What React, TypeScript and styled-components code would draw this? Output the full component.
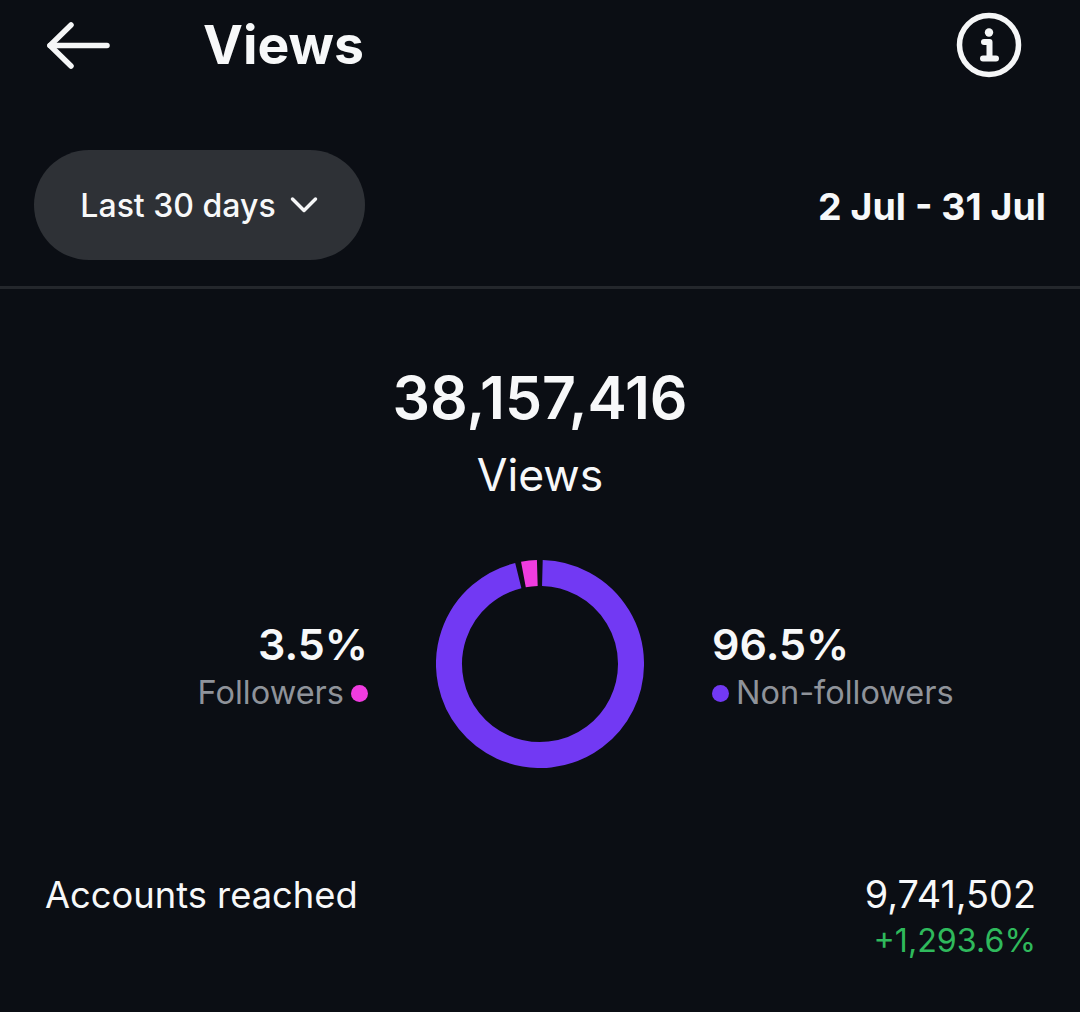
import { createGlobalStyle } from 'styled-components'
import styled from 'styled-components'

const GlobalStyle = createGlobalStyle`
	html, body {
		margin: 0;
		padding: 0;
		background: #0b0e14;
	}
`

const BackIcon = () => (
	<svg width="66" height="56" viewBox="0 0 66 56" fill="none" stroke="#f5f6f7" strokeWidth="5.5" strokeLinecap="round" strokeLinejoin="round">
		<path d="M4 28.5 H61" />
		<path d="M25 8 L4 28.5 L25 49" />
	</svg>
)

const InfoIcon = () => (
	<svg width="66" height="66" viewBox="0 0 66 66" fill="none">
		<circle cx="33" cy="33" r="29.5" stroke="#f5f6f7" strokeWidth="5.5" />
		<circle cx="33" cy="20.5" r="4.2" fill="#f5f6f7" />
		<path d="M28 30 H33.5 V46 M27 46.5 H40" stroke="#f5f6f7" strokeWidth="6" strokeLinecap="round" strokeLinejoin="round" />
	</svg>
)

const Chevron = () => (
	<svg width="28" height="18" viewBox="0 0 28 18" fill="none" stroke="#f5f6f7" strokeWidth="3.5" strokeLinecap="round" strokeLinejoin="round">
		<path d="M2.5 3 L14 14.5 L25.5 3" />
	</svg>
)

// 도넛 각도 계산 (12시 기준, 시계방향)
const polar = (r: number, deg: number) => {
	const a = (deg * Math.PI) / 180
	return `${(104 + r * Math.sin(a)).toFixed(2)} ${(104 - r * Math.cos(a)).toFixed(2)}`
}

const Donut = () => (
	<svg width="208" height="208" viewBox="0 0 208 208" fill="none" strokeWidth="26">
		<path d={`M${polar(91, 1.5)} A91 91 0 1 1 ${polar(91, -13.8)}`} stroke="#7239f3" />
		<path d={`M${polar(91, -10.5)} A91 91 0 0 1 ${polar(91, -1.7)}`} stroke="#f03ce0" />
	</svg>
)

export default function App() {
	return (
		<>
			<GlobalStyle />
			<Screen>
				<Header>
					<BackSlot>
						<BackIcon />
					</BackSlot>
					<Title>Views</Title>
					<InfoSlot>
						<InfoIcon />
					</InfoSlot>
				</Header>
				<FilterRow>
					<Pill>
						<span>Last 30 days</span>
						<Chevron />
					</Pill>
					<DateRange>2 Jul - 31 Jul</DateRange>
				</FilterRow>
				<Summary>
					<Total>38,157,416</Total>
					<TotalLabel>Views</TotalLabel>
					<ChartRow>
						<Legend $align="right">
							<Percent>3.5%</Percent>
							<LegendLabel>
								Followers
								<Dot $color="#f03ce0" />
							</LegendLabel>
						</Legend>
						<Donut />
						<Legend $align="left">
							<Percent>96.5%</Percent>
							<LegendLabel>
								<Dot $color="#7239f3" />
								Non-followers
							</LegendLabel>
						</Legend>
					</ChartRow>
				</Summary>
				<ReachRow>
					<ReachLabel>Accounts reached</ReachLabel>
					<ReachValues>
						<ReachNumber>9,741,502</ReachNumber>
						<ReachChange>+1,293.6%</ReachChange>
					</ReachValues>
				</ReachRow>
			</Screen>
		</>
	)
}

const Screen = styled.div`
	width: 1080px;
	height: 1012px;
	overflow: hidden;
	background: #0b0e14;
	color: #f7f8f9;
	font-family: Inter, 'Liberation Sans', sans-serif;
`
const Header = styled.header`
	display: flex;
	align-items: center;
	height: 90px;
`
const BackSlot = styled.div`
	display: flex;
	width: 203px;
	padding-left: 46px;
	box-sizing: border-box;
`
const Title = styled.h1`
	flex: 1;
	margin: 0;
	font-size: 53.5px;
	font-weight: 700;
	line-height: 90px;
`
const InfoSlot = styled.div`
	display: flex;
	padding-right: 58px;
`
const FilterRow = styled.div`
	display: flex;
	align-items: center;
	justify-content: space-between;
	height: 199px;
	padding: 60px 34px 26px;
	box-sizing: border-box;
	border-bottom: 3px solid #24272c;
`
const Pill = styled.button`
	display: flex;
	align-items: center;
	justify-content: center;
	gap: 14px;
	width: 331px;
	height: 110px;
	padding: 0 1px 0 0;
	border: 0;
	border-radius: 55px;
	background: #2e3136;
	color: #f7f8f9;
	font-family: inherit;
	font-size: 32px;
	font-weight: 500;
`
const DateRange = styled.div`
	padding-top: 2px;
	font-size: 37.5px;
	font-weight: 700;
`
const Summary = styled.section`
	display: flex;
	flex-direction: column;
	align-items: center;
	padding-top: 70px;
`
const Total = styled.div`
	font-size: 59px;
	font-weight: 600;
	line-height: 78px;
`
const TotalLabel = styled.div`
	font-size: 44.5px;
	line-height: 76px;
	margin-bottom: 47px;
`
const ChartRow = styled.div`
	display: grid;
	grid-template-columns: 1fr 208px 1fr;
	align-items: center;
	column-gap: 68px;
	width: 100%;
`
const Legend = styled.div<{ $align: 'left' | 'right' }>`
	display: flex;
	flex-direction: column;
	padding-top: 5px;
	align-items: ${(p) => (p.$align === 'right' ? 'flex-end' : 'flex-start')};
`
const Percent = styled.div`
	font-size: 43px;
	font-weight: 600;
	line-height: 53px;
`
const LegendLabel = styled.div`
	display: flex;
	align-items: center;
	gap: 7px;
	color: #8f939a;
	font-size: 32.5px;
	line-height: 44px;
`
const Dot = styled.span<{ $color: string }>`
	width: 17px;
	height: 17px;
	border-radius: 50%;
	background: ${(p) => p.$color};
`
const ReachRow = styled.section`
	display: flex;
	justify-content: space-between;
	padding: 101px 44px 0 45px;
`
const ReachLabel = styled.div`
	font-size: 36.3px;
	line-height: 52px;
`
const ReachValues = styled.div`
	display: flex;
	flex-direction: column;
	align-items: flex-end;
`
const ReachNumber = styled.div`
	font-size: 37.8px;
	line-height: 51px;
`
const ReachChange = styled.div`
	color: #2fb95c;
	font-size: 32.2px;
	line-height: 42px;
`
